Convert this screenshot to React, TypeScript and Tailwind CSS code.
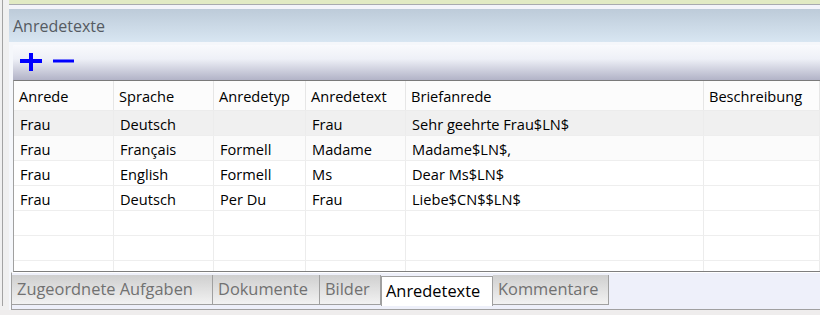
import React from 'react'

type Row = { anrede: string; sprache: string; typ: string; text: string; brief: string; beschreibung: string }

const rows: Row[] = [
    { anrede: 'Frau', sprache: 'Deutsch', typ: '', text: 'Frau', brief: 'Sehr geehrte Frau$LN$', beschreibung: '' },
    { anrede: 'Frau', sprache: 'Français', typ: 'Formell', text: 'Madame', brief: 'Madame$LN$,', beschreibung: '' },
    { anrede: 'Frau', sprache: 'English', typ: 'Formell', text: 'Ms', brief: 'Dear Ms$LN$', beschreibung: '' },
    { anrede: 'Frau', sprache: 'Deutsch', typ: 'Per Du', text: 'Frau', brief: 'Liebe$CN$$LN$', beschreibung: '' },
    { anrede: '', sprache: '', typ: '', text: '', brief: '', beschreibung: '' },
    { anrede: '', sprache: '', typ: '', text: '', brief: '', beschreibung: '' },
    { anrede: '', sprache: '', typ: '', text: '', brief: '', beschreibung: '' },
]

const columns = [
    { title: 'Anrede', key: 'anrede', w: 'w-[100px]' },
    { title: 'Sprache', key: 'sprache', w: 'w-[100px]' },
    { title: 'Anredetyp', key: 'typ', w: 'w-[92px]' },
    { title: 'Anredetext', key: 'text', w: 'w-[100px]' },
    { title: 'Briefanrede', key: 'brief', w: 'w-[298px]' },
    { title: 'Beschreibung', key: 'beschreibung', w: 'flex-1' },
] as const

const tabs = [
    { label: 'Zugeordnete Aufgaben', w: 'w-[201px]', active: false },
    { label: 'Dokumente', w: 'w-[107px]', active: false },
    { label: 'Bilder', w: 'w-[61px]', active: false },
    { label: 'Anredetexte', w: 'w-[112px]', active: true },
    { label: 'Kommentare', w: 'w-[116px]', active: false },
]

const App = () => {
    return (
        <div className="w-[820px] h-[315px] overflow-hidden bg-[#efeeee] flex flex-col font-['Open_Sans',sans-serif]">
            <div className="h-[310px] flex">
                {/* left frame */}
                <div className="w-[9px] shrink-0 bg-[#f0f0f0] flex">
                    <div className="ml-[2px] w-px h-[306px] bg-[#a3a3a3]" />
                </div>

                <div className="flex-1 flex flex-col">
                    <div className="h-[5px] bg-[#e1eac4] border-b border-[#a8aab0]" />
                    <div className="h-[4px] bg-[#f3f4fa]" />

                    {/* title bar */}
                    <div className="h-[33px] bg-linear-to-b from-[#bdcbd9] to-[#d8e6f2] flex items-center pl-[4px]">
                        <span className="text-[16px] text-[#555b62]">Anredetexte</span>
                    </div>

                    <div className="flex-1 flex flex-col bg-[#f5f7fb] pl-[2px]">
                        <div className="h-[3px]" />

                        {/* toolbar */}
                        <div className="ml-[2px] h-[35px] bg-linear-to-b from-[#f9fafd] via-[#eef0f7] via-40% to-[#b2b3c7] flex items-center gap-[11px] pl-[7px] pb-[1px]">
                            <svg width="22" height="18" viewBox="0 0 22 18">
                                <rect x="0" y="6" width="22" height="4" fill="#0000ff" />
                                <rect x="9" y="0" width="4" height="18" fill="#0000ff" />
                            </svg>
                            <svg width="21" height="18" viewBox="0 0 21 18">
                                <rect x="0" y="6.5" width="21" height="3" fill="#0000ff" />
                            </svg>
                        </div>

                        {/* table */}
                        <div className="ml-[2px] h-[192px] bg-white border-t border-t-[#7a7a7a] border-l border-l-[#a0a0a0] border-b border-b-[#7e7e7e] overflow-hidden flex flex-col">
                            <div className="h-[30px] shrink-0 flex bg-[#fcfcfc] border-b border-[#ececec]">
                                {columns.map((c, i) => (
                                    <div key={i} className={`${c.w} shrink-0 border-r border-[#e6e6e6] flex items-center pl-[5px] pt-[2px] text-[14.6px] text-black`}>
                                        {c.title}
                                    </div>
                                ))}
                            </div>
                            {rows.map((r, ri) => (
                                <div key={ri} className={`h-[25px] shrink-0 flex border-b border-[#eeeeee] ${ri === 0 ? 'bg-[#f0f0f0]' : ri === 1 ? 'bg-[#fbfbfb]' : 'bg-white'}`}>
                                    {columns.map((c, i) => (
                                        <div key={i} className={`${c.w} shrink-0 border-r border-[#ececec] flex items-center pl-[6px] pt-[4px] text-[14.6px] text-black`}>
                                            {r[c.key]}
                                        </div>
                                    ))}
                                </div>
                            ))}
                        </div>

                        {/* tab strip */}
                        <div className="h-[38px] bg-[#eef0fa] border-l border-b border-[#a0a0a0] border-t border-t-white flex items-start pt-[2px]">
                            {tabs.map((t, i) =>
                                t.active ? (
                                    <div key={i} className={`${t.w} shrink-0 h-[30px] mt-[1px] bg-white border border-[#a0a0a0] border-b-0 flex items-center pl-[4px] text-[16.4px] text-black`}>
                                        {t.label}
                                    </div>
                                ) : (
                                    <div key={i} className={`${t.w} shrink-0 h-[30px] bg-linear-to-b from-[#cfcfcf] to-[#f2f2f2] border-r border-b border-[#a0a0a0] flex items-center pl-[5px] text-[16.4px] text-[#717171]`}>
                                        {t.label}
                                    </div>
                                )
                            )}
                        </div>
                    </div>
                </div>
            </div>
            <div className="flex-1 bg-[#efeded]" />
        </div>
    )
}

export default App
